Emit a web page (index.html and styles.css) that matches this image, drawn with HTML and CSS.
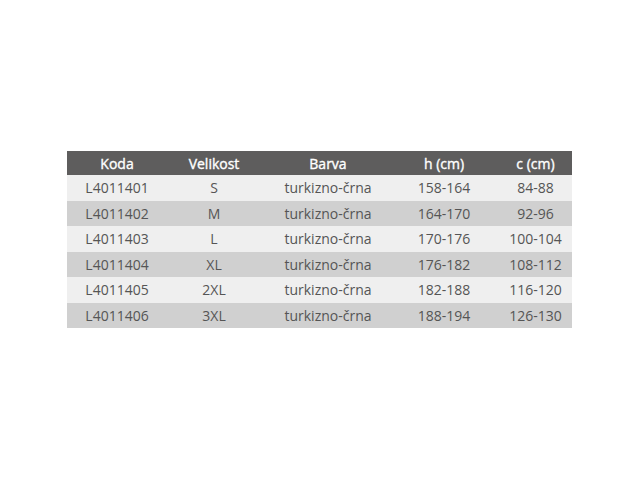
FILE: index.html
```html
<!DOCTYPE html>
<html lang="sl">
<head>
<meta charset="utf-8">
<title>Tabela velikosti</title>
<link rel="stylesheet" href="styles.css">
</head>
<body>
<div class="page">
  <table class="sizes">
    <colgroup>
      <col class="c1"><col class="c2"><col class="c3"><col class="c4"><col class="c5">
    </colgroup>
    <thead>
      <tr><th>Koda</th><th>Velikost</th><th>Barva</th><th>h (cm)</th><th>c (cm)</th></tr>
    </thead>
    <tbody>
      <tr><td>L4011401</td><td>S</td><td>turkizno-črna</td><td>158-164</td><td>84-88</td></tr>
      <tr><td>L4011402</td><td>M</td><td>turkizno-črna</td><td>164-170</td><td>92-96</td></tr>
      <tr><td>L4011403</td><td>L</td><td>turkizno-črna</td><td>170-176</td><td>100-104</td></tr>
      <tr><td>L4011404</td><td>XL</td><td>turkizno-črna</td><td>176-182</td><td>108-112</td></tr>
      <tr><td>L4011405</td><td>2XL</td><td>turkizno-črna</td><td>182-188</td><td>116-120</td></tr>
      <tr><td>L4011406</td><td>3XL</td><td>turkizno-črna</td><td>188-194</td><td>126-130</td></tr>
    </tbody>
  </table>
</div>
</body>
</html>
```
FILE: styles.css
```css
html, body {
  margin: 0;
  padding: 0;
  background: #ffffff;
}
.page {
  padding: 151px 0 0 67px;
}
.sizes {
  border-collapse: collapse;
  border-spacing: 0;
  table-layout: fixed;
  width: 505px;
  font-family: "Open Sans", "Liberation Sans", sans-serif;
  font-size: 14px;
}
.c1 { width: 94px; }
.c2 { width: 100px; }
.c3 { width: 128px; }
.c4 { width: 104px; }
.c5 { width: 79px; }
.sizes th,
.sizes td {
  padding: 0 0 0 6px;
  text-align: center;
  white-space: nowrap;
}
.sizes th {
  height: 24px;
  background: #5e5d5d;
  color: #ffffff;
  font-weight: 400;
  -webkit-text-stroke: 0.35px #ffffff;
}
.sizes td {
  height: 25.5px;
  color: #555555;
  font-weight: 400;
}
.sizes tbody tr:nth-child(odd) td { background: #efefef; }
.sizes tbody tr:nth-child(even) td { background: #d0d0d0; }
```
